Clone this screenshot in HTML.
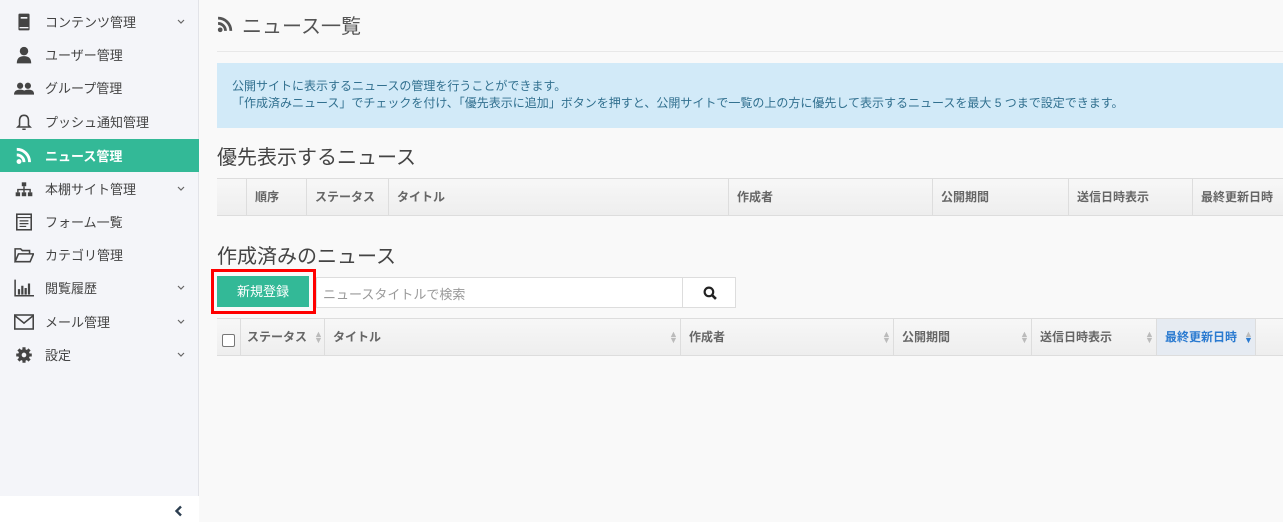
<!DOCTYPE html>
<html><head><meta charset="utf-8"><style>
*{margin:0;padding:0;box-sizing:border-box}
body{width:1283px;height:522px;overflow:hidden;background:#f9f9f9;font-family:"Liberation Sans","Noto Sans CJK JP",sans-serif;position:relative;color:#555}
.sb{position:absolute;left:0;top:0;width:199px;height:496px;background:#f4f5f9;border-right:1px solid #e2e3e8}
.sbb{position:absolute;left:0;top:496px;width:199px;height:26px;background:#fff}
.it{position:absolute;left:0;width:199px;height:33px;font-size:13px;color:#444}
.it .ic{position:absolute;left:14px;top:8px;width:20px;height:18px}
.it .tx{position:absolute;left:45px;top:7px}
.it .ch{position:absolute;left:177px;top:14px;width:8px;height:5px}
.act{background:#33b997;color:#fff;font-weight:bold}
.abs{position:absolute}
.tbl{position:absolute;left:217px;width:1066px;height:38px;background:linear-gradient(#f7f7f7,#eeeeee);border-top:1px solid #ddd;border-bottom:1px solid #ddd}
.c{position:absolute;top:0;height:36px;border-left:1px solid #ddd;font-size:12px;font-weight:bold;color:#666;padding:9px 0 0 8px}
.s{position:absolute;top:12px;font-size:9px;color:#bbb;line-height:6px}
</style></head><body>
<div class="sb"></div><div class="sbb"></div>
<svg class="abs" style="left:174px;top:505px" width="9" height="12" viewBox="0 0 9 12"><path d="M7 1.5L2.5 6 7 10.5" stroke="#2c3e50" stroke-width="2.4" fill="none"/></svg>

<div class="it" style="top:5px"><svg class="ic" viewBox="0 0 18 16"><rect x="4" y="0.5" width="10" height="15" rx="1" fill="#444"/><rect x="6" y="3.5" width="6" height="1.5" fill="#f4f5f9"/><rect x="5" y="12.5" width="8" height="1.2" fill="#f4f5f9"/></svg><span class="tx">コンテンツ管理</span><svg class="ch" viewBox="0 0 8 5"><path d="M1 1l3 3 3-3" stroke="#666" stroke-width="1.2" fill="none"/></svg></div>
<div class="it" style="top:38px"><svg class="ic" viewBox="0 0 18 16"><circle cx="9" cy="4.5" r="3.8" fill="#444"/><path d="M2.5 15.5q0-6.5 6.5-6.5t6.5 6.5z" fill="#444"/></svg><span class="tx">ユーザー管理</span></div>
<div class="it" style="top:71px"><svg class="ic" viewBox="0 0 18 16"><circle cx="5.5" cy="6" r="2.8" fill="#444"/><circle cx="12.5" cy="6" r="2.8" fill="#444"/><path d="M0 14q0-4.5 5.5-4.5t5.5 4.5zM7.5 14q0-4.5 5.5-4.5t5 4.5z" fill="#444"/></svg><span class="tx">グループ管理</span></div>
<div class="it" style="top:105px"><svg class="ic" viewBox="0 0 18 16"><path d="M9 2q-4 0-4 5v4l-1.5 1.5h11L13 11V7q0-5-4-5zM7.5 14.5h3" stroke="#444" stroke-width="1.4" fill="none"/></svg><span class="tx">プッシュ通知管理</span></div>
<div class="it act" style="top:139px"><svg class="ic" viewBox="0 0 18 16"><circle cx="4.5" cy="13" r="2.2" fill="#fff"/><path d="M2.5 7a6.5 6.5 0 0 1 6.5 6.5M2.5 2a11.5 11.5 0 0 1 11.5 11.5" stroke="#fff" stroke-width="2.6" fill="none"/></svg><span class="tx">ニュース管理</span></div>
<div class="it" style="top:172px"><svg class="ic" viewBox="0 0 18 16"><rect x="7" y="2" width="4" height="3.5" fill="#444"/><path d="M9 5.5v3M3.5 11V8.5h11V11M9 8.5V11" stroke="#444" stroke-width="1.3" fill="none"/><rect x="1.5" y="11" width="4" height="3.5" fill="#444"/><rect x="7" y="11" width="4" height="3.5" fill="#444"/><rect x="12.5" y="11" width="4" height="3.5" fill="#444"/></svg><span class="tx">本棚サイト管理</span><svg class="ch" viewBox="0 0 8 5"><path d="M1 1l3 3 3-3" stroke="#666" stroke-width="1.2" fill="none"/></svg></div>
<div class="it" style="top:205px"><svg class="ic" viewBox="0 0 18 16"><rect x="2.5" y="1" width="13" height="14" fill="none" stroke="#444" stroke-width="1.4"/><path d="M2.5 4h13M5 7h8M5 9.5h8M5 12h6" stroke="#444" stroke-width="1.1"/></svg><span class="tx">フォーム一覧</span></div>
<div class="it" style="top:238px"><svg class="ic" viewBox="0 0 18 16"><path d="M1 14V2.5h5l1.5 1.5h6.5V7M1 14l3-7h13.5l-3 7z" stroke="#444" stroke-width="1.4" fill="none"/></svg><span class="tx">カテゴリ管理</span></div>
<div class="it" style="top:271px"><svg class="ic" viewBox="0 0 18 16"><path d="M1 0.5v14.5h17" stroke="#444" stroke-width="1.4" fill="none"/><path d="M4.5 9v5M7.5 6v8M10.5 8v6M13.5 4v10" stroke="#444" stroke-width="2"/></svg><span class="tx">閲覧履歴</span><svg class="ch" viewBox="0 0 8 5"><path d="M1 1l3 3 3-3" stroke="#666" stroke-width="1.2" fill="none"/></svg></div>
<div class="it" style="top:305px"><svg class="ic" viewBox="0 0 18 16"><rect x="0.7" y="1.7" width="16.6" height="12.6" fill="none" stroke="#444" stroke-width="1.4"/><path d="M1 2.5l8 6.5 8-6.5" stroke="#444" stroke-width="1.4" fill="none"/></svg><span class="tx">メール管理</span><svg class="ch" viewBox="0 0 8 5"><path d="M1 1l3 3 3-3" stroke="#666" stroke-width="1.2" fill="none"/></svg></div>
<div class="it" style="top:338px"><svg class="ic" viewBox="0 0 18 16"><circle cx="9" cy="8" r="5.2" fill="#444"/><path d="M9 1v14M2 8h14M4 3l10 10M14 3l-10 10" stroke="#444" stroke-width="2.8"/><circle cx="9" cy="8" r="2.1" fill="#f4f5f9"/></svg><span class="tx">設定</span><svg class="ch" viewBox="0 0 8 5"><path d="M1 1l3 3 3-3" stroke="#666" stroke-width="1.2" fill="none"/></svg></div>

<svg class="abs" style="left:217px;top:16px" width="17" height="17" viewBox="0 0 16 16"><circle cx="3" cy="13" r="2.2" fill="#555"/><path d="M1 7a7 7 0 0 1 7 7M1 2a12 12 0 0 1 12 12" stroke="#555" stroke-width="2.6" fill="none"/></svg>
<div class="abs" style="left:242px;top:10px;font-size:20px;color:#555">ニュース一覧</div>
<div class="abs" style="left:217px;top:51px;width:1066px;border-top:1px solid #e8e8e8"></div>
<div class="abs" style="left:217px;top:63px;width:1066px;height:65px;background:#d2eaf8;color:#31708f;font-size:12px;line-height:17px;padding:15px 0 0 15px">公開サイトに表示するニュースの管理を行うことができます。<br>「作成済みニュース」でチェックを付け、「優先表示に追加」ボタンを押すと、公開サイトで一覧の上の方に優先して表示するニュースを最大 5 つまで設定できます。</div>

<div class="abs" style="left:217px;top:141px;font-size:20px;color:#444">優先表示するニュース</div>
<div class="tbl" style="top:178px">
<div class="c" style="left:29px;width:60px">順序</div>
<div class="c" style="left:89px;width:82px">ステータス</div>
<div class="c" style="left:171px;width:340px">タイトル</div>
<div class="c" style="left:511px;width:204px">作成者</div>
<div class="c" style="left:715px;width:136px">公開期間</div>
<div class="c" style="left:851px;width:124px">送信日時表示</div>
<div class="c" style="left:975px;width:91px">最終更新日時</div>
</div>

<div class="abs" style="left:217px;top:240px;font-size:20px;color:#444">作成済みのニュース</div>
<div class="abs" style="left:211px;top:269px;width:105px;height:45px;border:3px solid #f00"></div>
<div class="abs" style="left:217px;top:276px;width:92px;height:31px;background:#33b997;color:#fff;font-size:13px;text-align:center;line-height:31px">新規登録</div>
<div class="abs" style="left:316px;top:277px;width:367px;height:31px;background:#fff;border:1px solid #ddd;font-size:13px;color:#999;padding:6px 0 0 6px">ニュースタイトルで検索</div>
<div class="abs" style="left:682px;top:277px;width:54px;height:31px;background:#fff;border:1px solid #ddd"><svg style="position:absolute;left:20px;top:8px" width="14" height="14" viewBox="0 0 13 13"><circle cx="5.5" cy="5.5" r="4" stroke="#222" stroke-width="2" fill="none"/><path d="M8.5 8.5l3.5 3.5" stroke="#222" stroke-width="2.4"/></svg></div>

<div class="tbl" style="top:318px">
<div class="abs" style="left:5px;top:15px;width:13px;height:13px;border:1px solid #777;border-radius:2px;background:#fff"></div>
<div class="c" style="left:23px;width:84px;padding-left:6px">ステータス<span class="s" style="left:73px">▲<br>▼</span></div>
<div class="c" style="left:107px;width:356px">タイトル<span class="s" style="left:344px">▲<br>▼</span></div>
<div class="c" style="left:463px;width:213px">作成者<span class="s" style="left:201px">▲<br>▼</span></div>
<div class="c" style="left:676px;width:138px">公開期間<span class="s" style="left:126px">▲<br>▼</span></div>
<div class="c" style="left:814px;width:125px">送信日時表示<span class="s" style="left:113px">▲<br>▼</span></div>
<div class="c" style="left:939px;width:99px;background:#e6ebf2;color:#2a7ad0">最終更新日時<span class="s" style="left:87px;color:#2a7ad0"><span style="color:#bbb">▲</span><br>▼</span></div>
<div class="c" style="left:1038px;width:28px"></div>
</div>
</body></html>
